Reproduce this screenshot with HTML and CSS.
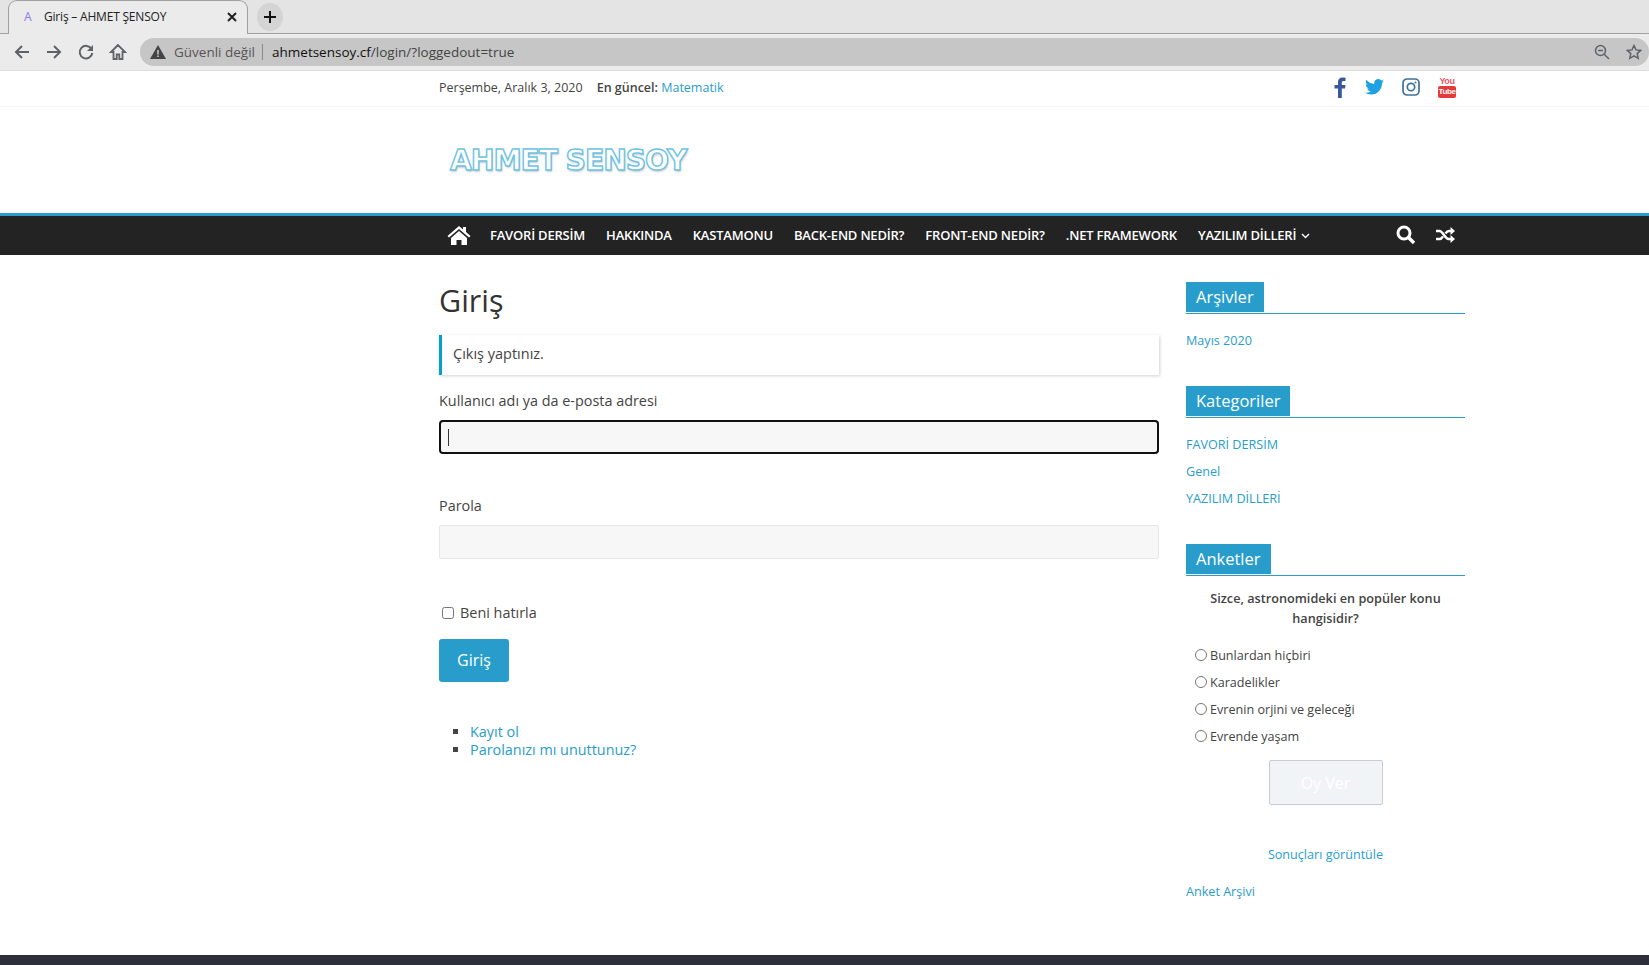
FILE: index.html
```html
<!DOCTYPE html>
<html lang="tr">
<head>
  <meta charset="UTF-8">
  <title>Giriş – AHMET ŞENSOY</title>
  <link rel="stylesheet" href="styles.css">
</head>
<body>

  <!-- Browser chrome -->
  <div class="tabstrip">
    <div class="tab">
      <span class="tab-favicon">A</span>
      <span class="tab-title">Giriş – AHMET ŞENSOY</span>
      <svg class="tab-close" width="10" height="10" viewBox="0 0 10 10"><path d="M1 1l8 8M9 1l-8 8" stroke="#222" stroke-width="2"/></svg>
    </div>
    <div class="new-tab">
      <svg width="14" height="14" viewBox="0 0 14 14"><path d="M7 1v12M1 7h12" stroke="#111" stroke-width="2"/></svg>
    </div>
  </div>
  <div class="toolbar">
    <svg class="tool" width="18" height="18" viewBox="0 0 18 18"><path d="M16 9H3M9 3L3 9l6 6" fill="none" stroke="#5f6368" stroke-width="2"/></svg>
    <svg class="tool" width="18" height="18" viewBox="0 0 18 18"><path d="M2 9h13M9 3l6 6-6 6" fill="none" stroke="#5f6368" stroke-width="2"/></svg>
    <svg class="tool" width="18" height="18" viewBox="0 0 18 18"><path d="M14.500 6A6.300 6.300 0 1 0 15.300 10" fill="none" stroke="#5f6368" stroke-width="2"/><path d="M16 2v6h-6z" fill="#5f6368"/></svg>
    <svg class="tool" width="18" height="18" viewBox="0 0 18 18"><path d="M9 2L2 9h2.500v7h3.200v-4.500h2.600V16h3.200V9H16z" fill="none" stroke="#5f6368" stroke-width="1.800"/></svg>
    <div class="omnibox">
      <svg width="16" height="14" viewBox="0 0 16 14"><path d="M8 0l8 14H0z" fill="#444"/><path d="M7.200 5h1.600v4.500H7.200zM7.200 10.500h1.600V12H7.200z" fill="#c6c6c6"/></svg>
      <span class="security">Güvenli değil</span>
      <span class="url"><b>ahmetsensoy.cf</b>/login/?loggedout=true</span>
      <svg class="omni-icon" width="16" height="16" viewBox="0 0 16 16"><circle cx="6.500" cy="6.500" r="5" fill="none" stroke="#5f6368" stroke-width="1.500"/><path d="M4 6.500h5M10.200 10.200L15 15" stroke="#5f6368" stroke-width="1.500"/></svg>
      <svg class="omni-icon" width="16" height="16" viewBox="0 0 16 16"><path d="M8 1.500l2 4.400 4.700.5-3.500 3.200 1 4.700L8 11.900l-4.200 2.400 1-4.700L1.300 6.400 6 5.900z" fill="none" stroke="#5f6368" stroke-width="1.500"/></svg>
    </div>
  </div>

  <!-- Top bar -->
  <div class="topbar">
    <div class="wrap topbar-in">
      <span class="date">Perşembe, Aralık 3, 2020</span>
      <span class="latest"><b>En güncel:</b> <a href="#">Matematik</a></span>
      <div class="social">
        <svg width="13" height="21" viewBox="0 0 13 21"><path d="M4 21V11.500H0.500V8H4V5C4 2 5.800 0.500 8.500 0.500c1.300 0 2.500.1 3 .2V4H9.500C8 4 7.800 4.700 7.800 5.800V8h3.700l-.5 3.500H7.800V21z" fill="#3b5998"/></svg>
        <svg width="19" height="16" viewBox="0 0 24 20"><path d="M24 2.400c-.9.400-1.800.7-2.800.8 1-.6 1.800-1.600 2.200-2.700-1 .6-2 1-3.100 1.200A4.900 4.900 0 0 0 11.900 6.200C7.800 6 4.200 4 1.700.9c-1.300 2.200-.7 5.100 1.500 6.600-.8 0-1.600-.2-2.200-.6 0 2.400 1.700 4.400 3.900 4.900-.7.200-1.500.2-2.200.1.600 2 2.400 3.400 4.600 3.400A9.900 9.900 0 0 1 0 17.300 14 14 0 0 0 7.500 19.500c9.100 0 14.300-7.700 14-14.600 1-.7 1.800-1.500 2.500-2.500z" fill="#1da1e2"/></svg>
        <svg width="18" height="18" viewBox="0 0 18 18"><rect x="1" y="1" width="16" height="16" rx="4" fill="none" stroke="#3f729b" stroke-width="1.700"/><circle cx="9" cy="9" r="3.700" fill="none" stroke="#3f729b" stroke-width="1.700"/><circle cx="13.500" cy="4.500" r="1" fill="#3f729b"/></svg>
        <span class="yt"><span class="yt-you">You</span><span class="yt-tube">Tube</span></span>
      </div>
    </div>
  </div>

  <!-- Logo -->
  <header class="masthead">
    <div class="wrap">
      <div class="logo">AHMET SENSOY</div>
    </div>
  </header>

  <!-- Main menu -->
  <nav class="mainnav">
    <div class="wrap nav-in">
      <svg class="nav-home" width="24" height="20" viewBox="0 0 24 20"><path d="M12 1L0.500 11l1.500 1.500L12 4l10 8.500 1.500-1.500L19 7V2h-3v2.500z" fill="#fff"/><path d="M4 13l8-7 8 7v7h-5.500v-5h-5v5H4z" fill="#fff"/></svg>
      <a href="#">FAVORİ DERSİM</a>
      <a href="#">HAKKINDA</a>
      <a href="#">KASTAMONU</a>
      <a href="#">BACK-END NEDİR?</a>
      <a href="#">FRONT-END NEDİR?</a>
      <a href="#">.NET FRAMEWORK</a>
      <a href="#">YAZILIM DİLLERİ <svg class="caret" width="9" height="6" viewBox="0 0 9 6"><path d="M1 1l3.500 3.500L8 1" fill="none" stroke="#fff" stroke-width="1.400"/></svg></a>
      <div class="nav-tools">
        <svg width="20" height="20" viewBox="0 0 20 20"><circle cx="8" cy="8" r="6" fill="none" stroke="#fff" stroke-width="3"/><path d="M12.500 12.500L18 18" stroke="#fff" stroke-width="3.400"/></svg>
        <svg width="19" height="16" viewBox="0 0 19 16"><path d="M0 4h3.500c3.500 0 5.500 8 9 8H15M0 12h3.500C5 12 6 11 7 9.500M9.500 6.500C10.500 5 11.500 4 13 4h2" fill="none" stroke="#fff" stroke-width="2.400"/><path d="M14.500 0L19 4l-4.500 4zM14.500 8L19 12l-4.500 4z" fill="#fff"/></svg>
      </div>
    </div>
  </nav>

  <div class="wrap content">
    <main class="primary">
      <h1>Giriş</h1>
      <div class="notice">Çıkış yaptınız.</div>
      <form class="login">
        <label class="field-label">Kullanıcı adı ya da e-posta adresi</label>
        <div class="input input-focus"><span class="cursor"></span></div>
        <label class="field-label">Parola</label>
        <div class="input"></div>
        <label class="remember"><input type="checkbox"> Beni hatırla</label>
        <button type="button" class="submit">Giriş</button>
      </form>
      <ul class="login-links">
        <li><a href="#">Kayıt ol</a></li>
        <li><a href="#">Parolanızı mı unuttunuz?</a></li>
      </ul>
    </main>

    <aside class="sidebar">
      <h3 class="widget-title"><span>Arşivler</span></h3>
      <ul class="widget-list">
        <li><a href="#">Mayıs 2020</a></li>
      </ul>

      <h3 class="widget-title"><span>Kategoriler</span></h3>
      <ul class="widget-list">
        <li><a href="#">FAVORİ DERSİM</a></li>
        <li><a href="#">Genel</a></li>
        <li><a href="#">YAZILIM DİLLERİ</a></li>
      </ul>

      <h3 class="widget-title"><span>Anketler</span></h3>
      <p class="poll-q">Sizce, astronomideki en popüler konu hangisidir?</p>
      <div class="poll-opts">
        <label><input type="radio" name="poll">Bunlardan hiçbiri</label>
        <label><input type="radio" name="poll">Karadelikler</label>
        <label><input type="radio" name="poll">Evrenin orjini ve geleceği</label>
        <label><input type="radio" name="poll">Evrende yaşam</label>
      </div>
      <div class="poll-btn"><button type="button" class="vote">Oy Ver</button></div>
      <div class="poll-results"><a href="#">Sonuçları görüntüle</a></div>
      <div class="poll-archive"><a href="#">Anket Arşivi</a></div>
    </aside>
  </div>

  <footer class="footer"></footer>

</body>
</html>
```

FILE: styles.css
```css
/* Global */
* { box-sizing: border-box; }
html, body { height: 965px; overflow: hidden; }
body {
  margin: 0;
  font-family: "Open Sans", sans-serif;
  font-size: 15px;
  color: #444;
  background: #fff;
}
a { color: #289dcc; text-decoration: none; }

/* the page sits right of centre in the screenshot */
.wrap {
  width: 1026px;
  margin-left: 439px;
}

/* Browser chrome */
.tabstrip {
  height: 34px;
  background: #e4e4e4;
  border-bottom: 1px solid #a0a0a0;
  display: flex;
  align-items: flex-start;
  padding-left: 8px;
}
.tab {
  width: 240px;
  height: 34px;
  background: #ebebeb;
  border: 1px solid #a0a0a0;
  border-bottom: none;
  border-radius: 9px 9px 0 0;
  display: flex;
  align-items: center;
  padding: 0 10px 2px 15px;
  font-size: 12px;
  color: #222;
  letter-spacing: -0.2px;
}
.tab-favicon { color: #8a7cf0; width: 20px; font-size: 12px; }
.tab-title { flex: 1; }
.new-tab {
  width: 26px;
  height: 28px;
  margin: 3px 0 0 9px;
  border-radius: 50%;
  background: #d4d4d4;
  display: flex;
  align-items: center;
  justify-content: center;
}
.toolbar {
  height: 37px;
  background: #ebebeb;
  border-bottom: 1px solid #ddd;
  display: flex;
  align-items: center;
  padding: 0 0 0 13px;
  gap: 14px;
}
.omnibox {
  flex: 1;
  height: 28px;
  margin-left: -1px;
  background: #c6c6c6;
  border-radius: 14px;
  display: flex;
  align-items: center;
  padding: 0 7px 0 10px;
  font-size: 13.500px;
}
.security {
  color: #555;
  margin-left: 8px;
  padding-right: 7px;
  border-right: 1px solid #8a8a8a;
  line-height: 16px;
}
.url { color: #444; margin-left: 9px; flex: 1; }
.url b { font-weight: 400; color: #111; }
.omni-icon { margin-left: 16px; }

/* Top bar */
.topbar {
  height: 36px;
  border-bottom: 1px solid #f5f5f5;
  font-size: 12.500px;
}
.topbar-in {
  height: 35px;
  display: flex;
  align-items: center;
  padding-bottom: 3px;
}
.latest { margin-left: 14px; }
.latest b { font-weight: 600; }
.social {
  margin-left: auto;
  margin-right: 9px;
  display: flex;
  align-items: center;
  gap: 18px;
}
.yt {
  display: flex;
  flex-direction: column;
  align-items: center;
  width: 18px;
  font-family: "Liberation Sans", sans-serif;
  font-weight: 700;
  font-size: 8px;
  line-height: 10px;
  letter-spacing: -0.4px;
}
.yt-you { color: #e8556a; font-size: 9px; }
.yt-tube { background: #e63a3a; color: #fff; border-radius: 2px; width: 18px; line-height: 12px; text-align: center; }

/* Logo */
.masthead { height: 106px; }
.logo {
  font-family: "DejaVu Sans", sans-serif;
  font-weight: 700;
  font-size: 28.300px;
  line-height: 36px;
  letter-spacing: -1.100px;
  padding: 36px 0 0 11px;
  color: #fff;
  -webkit-text-stroke: 1.400px #6cc3e6;
  text-shadow: 1px 2px 2px rgba(0,0,0,0.2);
}

/* Main menu */
.mainnav {
  height: 42px;
  background: #232323;
  border-top: 3px solid #289dcc;
}
.nav-in {
  height: 39px;
  display: flex;
  align-items: center;
  gap: 21px;
  padding-bottom: 2px;
  font-size: 13px;
  font-weight: 600;
  letter-spacing: -0.2px;
}
.nav-in a { color: #fff; white-space: nowrap; }
.nav-home { margin-left: 8px; margin-right: -2px; }
.caret { margin-left: 2px; vertical-align: 1px; }
.nav-tools {
  margin-left: auto;
  margin-right: 10px;
  display: flex;
  align-items: center;
  gap: 20px;
}

/* Page layout */
.content {
  display: flex;
  justify-content: space-between;
  height: 700px;
}
.primary { width: 720px; padding-top: 25px; }
.sidebar { width: 279px; padding-top: 27px; }

h1 {
  margin: 0 0 14px;
  font-size: 30.500px;
  font-weight: 400;
  line-height: 41px;
  color: #333;
}
.notice {
  height: 40px;
  line-height: 37px;
  padding-left: 11px;
  border-left: 3px solid #00a0d2;
  box-shadow: 1px 1px 3px rgba(0,0,0,0.18);
  font-size: 14.500px;
}
.field-label {
  display: block;
  font-size: 14.400px;
  line-height: 20px;
  margin-top: 16px;
}
.login .input + .field-label { margin-top: 42px; }
.input {
  height: 34px;
  margin-top: 9px;
  background: #f7f7f7;
  border: 1px solid #e6e6e6;
  border-radius: 2px;
  display: flex;
  align-items: center;
  padding-left: 7px;
}
.input-focus { border: 2px solid #111; border-radius: 4px; }
.cursor { width: 1px; height: 17px; background: #333; }
.remember {
  display: flex;
  align-items: center;
  gap: 6px;
  margin-top: 44px;
  font-size: 14.400px;
  line-height: 20px;
}
.remember input { margin: 0 0 0 3px; width: 12px; height: 12px; }
.submit {
  display: block;
  width: 70px;
  height: 43px;
  margin-top: 16px;
  padding-bottom: 3px;
  background: #289dcc;
  border: none;
  border-radius: 3px;
  color: #fff;
  font: 400 16px "Open Sans", sans-serif;
}
.login-links {
  margin: 41px 0 0;
  padding-left: 31px;
  list-style: square;
  font-size: 14.400px;
  line-height: 18px;
}

/* Sidebar */
.widget-title {
  margin: 0;
  font-size: 16.500px;
  font-weight: 400;
  line-height: 30px;
  border-bottom: 1px solid #289dcc;
  height: 32px;
}
.widget-title span {
  display: inline-block;
  height: 30px;
  padding: 0 10px;
  background: #289dcc;
  color: #fff;
}
.widget-list {
  list-style: none;
  margin: 0 0 32px;
  padding: 13px 0 0;
  font-size: 12.600px;
  line-height: 27px;
}
.poll-q {
  margin: 12px 0 0;
  text-align: center;
  font-size: 12.700px;
  font-weight: 600;
  line-height: 20px;
}
.poll-opts {
  margin-top: 14px;
  padding-left: 9px;
  font-size: 12.600px;
  line-height: 27px;
}
.poll-opts label { display: flex; align-items: center; gap: 3px; }
.poll-opts input { margin: -2px 0 0; width: 12px; height: 12px; }
.poll-btn { text-align: center; margin-top: 10px; }
.vote {
  width: 114px;
  height: 45px;
  background: #f1f4f7;
  border: 1px solid #ccc;
  border-radius: 2px;
  color: #fff;
  font: 400 16px "Open Sans", sans-serif;
}
.poll-results { text-align: center; font-size: 12.600px; margin-top: 41px; line-height: 18px; }
.poll-archive { font-size: 12.600px; margin-top: 19px; line-height: 18px; }

.footer { height: 10px; background: #2d2f3a; }
```
